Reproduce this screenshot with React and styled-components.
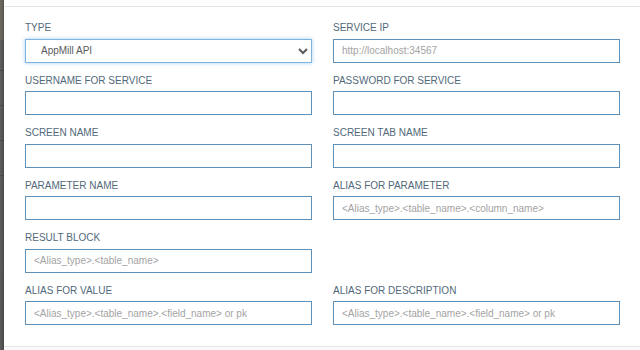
import React from "react";
import styled, { createGlobalStyle } from "styled-components";

const Global = createGlobalStyle`
  html, body { margin: 0; padding: 0; background: #ffffff; }
  body { font-family: "Liberation Sans", Arial, sans-serif; }
  * { box-sizing: border-box; }
`;

const Page = styled.div`
  display: flex;
  width: 640px;
  height: 350px;
  overflow: hidden;
`;

const Backdrop = styled.div`
  width: 4px;
  flex: none;
  background: linear-gradient(to bottom, #6b675f 0px, #6b675f 40px, #5d5d5d 40px, #585858 100%);
  display: flex;
  flex-direction: column;
  gap: 34px;
  padding-top: 70px;
`;

const BackdropLine = styled.div`
  height: 1px;
  background: #4c4c4c;
`;

const Modal = styled.div`
  flex: 1;
  display: flex;
  flex-direction: column;
  background: #ffffff;
  box-shadow: -1px 0 2px rgba(0, 0, 0, 0.25);
`;

const Header = styled.div`
  height: 7px;
  border-bottom: 1px solid #e5e5e5;
  flex: none;
`;

const Body = styled.div`
  display: grid;
  grid-template-columns: 287px 287px;
  column-gap: 21px;
  row-gap: 12px;
  padding: 15px 21px 21px 21px;
  flex: none;
`;

const Footer = styled.div`
  flex: 1;
  border-top: 1px solid #e5e5e5;
  background: #fafafa;
`;

const Field = styled.div`
  display: flex;
  flex-direction: column;
`;

const Label = styled.label`
  font-size: 10px;
  line-height: 11.5px;
  color: #52697a;
  text-transform: uppercase;
  margin-bottom: 5px;
  white-space: nowrap;
`;

const Input = styled.input`
  height: 24px;
  width: 100%;
  border: 1px solid #5f91b8;
  border-radius: 0;
  padding: 0 8px;
  font-family: "Liberation Sans", Arial, sans-serif;
  font-size: 10px;
  color: #555555;
  background: #ffffff;
  outline: none;
  &::placeholder { color: #a3a3a3; }
`;

const Select = styled.select`
  height: 24px;
  width: 100%;
  border: 1px solid #7fb3e0;
  border-radius: 0;
  padding: 0 4px 0 11px;
  font-family: "Liberation Sans", Arial, sans-serif;
  font-size: 10px;
  color: #5a5a5a;
  background: #ffffff;
  outline: none;
  box-shadow: 0 0 4px rgba(102, 175, 233, 0.6);
`;

const Empty = styled.div``;

const fields = [
  { label: "Type", select: true },
  { label: "Service IP", placeholder: "http://localhost:34567" },
  { label: "Username for service" },
  { label: "Password for service" },
  { label: "Screen name" },
  { label: "Screen tab name" },
  { label: "Parameter name" },
  { label: "Alias for parameter", placeholder: "<Alias_type>.<table_name>.<column_name>" },
  { label: "Result block", placeholder: "<Alias_type>.<table_name>" },
  { empty: true },
  { label: "Alias for value", placeholder: "<Alias_type>.<table_name>.<field_name> or pk" },
  { label: "Alias for description", placeholder: "<Alias_type>.<table_name>.<field_name> or pk" },
];

export default function App() {
  return (
    <>
      <Global />
      <Page>
        <Backdrop>
          <BackdropLine />
          <BackdropLine />
          <BackdropLine />
          <BackdropLine />
        </Backdrop>
        <Modal>
          <Header />
          <Body>
            {fields.map((f, i) =>
              f.empty ? (
                <Empty key={i} />
              ) : (
                <Field key={i}>
                  <Label>{f.label}</Label>
                  {f.select ? (
                    <Select defaultValue="appmill">
                      <option value="appmill">AppMill API</option>
                      <option value="rest">REST API</option>
                    </Select>
                  ) : (
                    <Input type={f.label.startsWith("Password") ? "password" : "text"} placeholder={f.placeholder || ""} />
                  )}
                </Field>
              )
            )}
          </Body>
          <Footer />
        </Modal>
      </Page>
    </>
  );
}
